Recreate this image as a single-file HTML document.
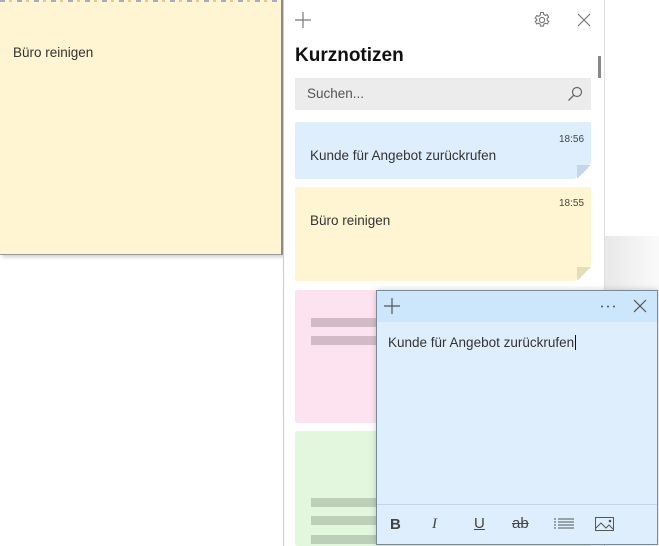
<!DOCTYPE html>
<html><head><meta charset="utf-8"><style>
*{margin:0;padding:0;box-sizing:border-box}
body{width:659px;height:546px;overflow:hidden;background:#fff;position:relative;font-family:"Segoe UI","Liberation Sans","DejaVu Sans",sans-serif;color:#222}
.abs{position:absolute}
.blur{position:absolute;height:9px;opacity:.45}
</style></head><body>
<div class="abs" style="left:0;top:0;width:283px;height:255px;background:#fff5d2;border-right:2px solid #8a8a8a;border-bottom:1px solid #999;box-shadow:2px 2px 4px rgba(0,0,0,.2)"></div>
<div class="abs" style="left:0;top:0;width:281px;height:2px;background:repeating-linear-gradient(90deg,#6a7ab0 0 5px,#fff5d2 5px 9px,#c8b070 9px 12px,#fff5d2 12px 17px);opacity:.6"></div>
<div class="abs" style="left:13px;top:45px;font-size:13.5px;color:#333">Büro reinigen</div>
<div class="abs" style="left:604px;top:236px;width:55px;height:60px;background:linear-gradient(90deg,#e8e8e8,#fafafa)"></div>
<div class="abs" style="left:283px;top:0;width:322px;height:546px;background:#fff;border-right:1px solid #ddd;border-left:1px solid #ccc"></div>
<svg class="abs" style="left:294px;top:11px" width="18" height="18"><path d="M9 1V17M1 9H17" stroke="#777" stroke-width="1.2"/></svg>
<svg class="abs" style="left:533px;top:11px" width="18" height="18" viewBox="0 0 18 18"><circle cx="9" cy="9" r="2.6" fill="none" stroke="#777" stroke-width="1.1"/><path d="M7.6 1.5h2.8l.4 2 1.6.9 1.9-.7 1.4 2.4-1.5 1.3v1.8l1.5 1.3-1.4 2.4-1.9-.7-1.6.9-.4 2H7.6l-.4-2-1.6-.9-1.9.7-1.4-2.4 1.5-1.3V8.3L2.3 7l1.4-2.4 1.9.7 1.6-.9z" fill="none" stroke="#777" stroke-width="1.1"/></svg>
<svg class="abs" style="left:577px;top:13px" width="14" height="14"><path d="M1 1L13 13M13 1L1 13" stroke="#777" stroke-width="1.2"/></svg>
<div class="abs" style="left:295px;top:45px;font-size:19px;font-weight:bold;color:#111">Kurznotizen</div>
<div class="abs" style="left:598px;top:56px;width:3px;height:22px;background:#888"></div>
<div class="abs" style="left:295px;top:78px;width:296px;height:32px;background:#ececec"></div>
<div class="abs" style="left:307px;top:86px;font-size:13.5px;color:#555">Suchen...</div>
<svg class="abs" style="left:567px;top:86px" width="16" height="16"><circle cx="10" cy="6" r="4.5" fill="none" stroke="#666" stroke-width="1.2"/><path d="M6.8 9.2L1.5 14.5" stroke="#666" stroke-width="1.3"/></svg>
<div class="abs" style="left:295px;top:122px;width:296px;height:57px;background:#dfeefd;border-radius:2px;clip-path:polygon(0 0,100% 0,100% 71%,94.5% 100%,0 100%)"></div>
<div class="abs" style="left:577px;top:165px;width:14px;height:14px;background:linear-gradient(135deg,#c6d6e8 50%,transparent 50%)"></div>
<div class="abs" style="left:559px;top:134px;font-size:10px;color:#444">18:56</div>
<div class="abs" style="left:310px;top:148px;font-size:13.5px;color:#333">Kunde für Angebot zurückrufen</div>
<div class="abs" style="left:295px;top:187px;width:296px;height:94px;background:#fff5d2;border-radius:2px;clip-path:polygon(0 0,100% 0,100% 85%,94.5% 100%,0 100%)"></div>
<div class="abs" style="left:577px;top:267px;width:14px;height:14px;background:linear-gradient(135deg,#e6dcb8 50%,transparent 50%)"></div>
<div class="abs" style="left:559px;top:198px;font-size:10px;color:#444">18:55</div>
<div class="abs" style="left:310px;top:213px;font-size:13.5px;color:#333">Büro reinigen</div>
<div class="abs" style="left:295px;top:290px;width:296px;height:133px;background:#fde3ef;border-radius:2px"></div>
<div class="blur" style="left:311px;top:318px;width:65px;background:#a08a95"></div>
<div class="blur" style="left:311px;top:336px;width:65px;background:#a08a95"></div>
<div class="abs" style="left:295px;top:431px;width:296px;height:115px;background:#e3f7de;border-radius:2px"></div>
<div class="blur" style="left:311px;top:498px;width:65px;background:#8f9e8c"></div>
<div class="blur" style="left:311px;top:516px;width:65px;background:#8f9e8c"></div>
<div class="blur" style="left:311px;top:535px;width:65px;background:#8f9e8c"></div>
<div class="abs" style="left:376px;top:290px;width:282px;height:255px;background:#dfeefd;border:1px solid #7a8a99;box-shadow:0 0 6px rgba(0,0,0,.2)"></div>
<div class="abs" style="left:377px;top:291px;width:280px;height:31px;background:#cce6fb"></div>
<svg class="abs" style="left:383px;top:297px" width="18" height="18"><path d="M9 1V17M1 9H17" stroke="#555" stroke-width="1.2"/></svg>
<svg class="abs" style="left:600px;top:305px" width="16" height="3"><circle cx="2" cy="1.5" r="1" fill="#555"/><circle cx="8" cy="1.5" r="1" fill="#555"/><circle cx="14" cy="1.5" r="1" fill="#555"/></svg>
<svg class="abs" style="left:633px;top:299px" width="14" height="14"><path d="M1 1L13 13M13 1L1 13" stroke="#555" stroke-width="1.2"/></svg>
<div class="abs" style="left:388px;top:335px;font-size:13.5px;color:#333">Kunde für Angebot zurückrufen<span style="border-left:1px solid #111;margin-left:1px"></span></div>
<div class="abs" style="left:377px;top:504px;width:280px;height:1px;background:#c5d5e5"></div>
<div class="abs" style="left:390px;top:516px;font-size:15px;font-weight:bold;color:#444">B</div>
<div class="abs" style="left:432px;top:516px;font-size:15px;font-style:italic;color:#444;font-family:'Liberation Serif',serif">I</div>
<div class="abs" style="left:474px;top:515px;font-size:15px;color:#444;text-decoration:underline">U</div>
<div class="abs" style="left:512px;top:515px;font-size:15px;color:#444;text-decoration:line-through">ab</div>
<svg class="abs" style="left:554px;top:518px" width="20" height="12"><path d="M0 1H2M4 1H20M0 4H2M4 4H20M0 7H2M4 7H20M0 10H2M4 10H20" stroke="#555" stroke-width="1"/></svg>
<svg class="abs" style="left:595px;top:517px" width="20" height="15"><rect x=".5" y=".5" width="18" height="13" fill="none" stroke="#555"/><path d="M1 11L6 6L11 11L14 8L18 12" fill="none" stroke="#555"/><circle cx="15" cy="4" r="1.3" fill="#555"/></svg>
</body></html>
